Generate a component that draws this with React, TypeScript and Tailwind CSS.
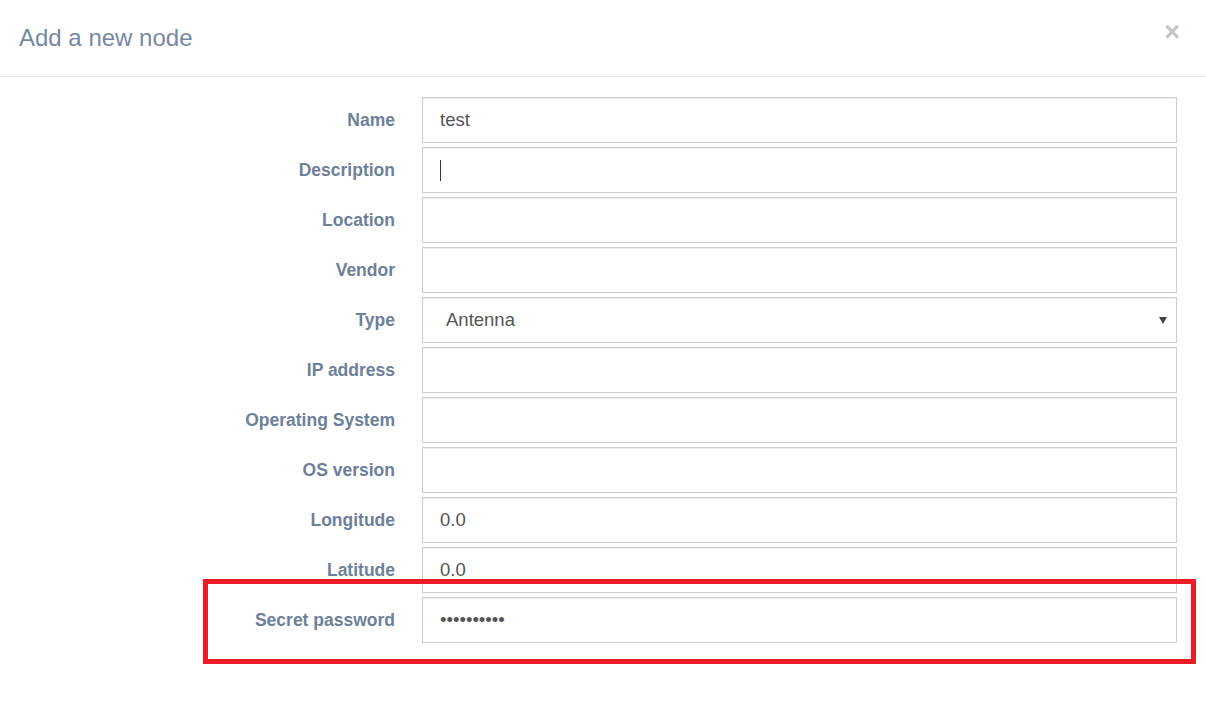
import React from 'react';

const fields: { label: string; value?: string; select?: boolean; caret?: boolean }[] = [
  { label: 'Name', value: 'test' },
  { label: 'Description', caret: true },
  { label: 'Location' },
  { label: 'Vendor' },
  { label: 'Type', value: 'Antenna', select: true },
  { label: 'IP address' },
  { label: 'Operating System' },
  { label: 'OS version' },
  { label: 'Longitude', value: '0.0' },
  { label: 'Latitude', value: '0.0' },
  { label: 'Secret password', value: '••••••••••' },
];

function App() {
  return (
    <div className="relative w-[1206px] h-[701px] bg-white overflow-hidden font-['Liberation_Sans',Arial,sans-serif]">
      {/* Header */}
      <div className="h-[77px] border-b border-[#e5e5e5] flex items-center justify-between pl-[19px] pr-[26px]">
        <h4 className="text-[24px] text-[#7489a1] leading-none pb-[1px]">Add a new node</h4>
        <span className="text-[27px] font-bold text-[#c4c4c4] leading-none -mt-[12px]">×</span>
      </div>

      {/* Form */}
      <div className="pt-[20px] flex flex-col gap-[4px]">
        {fields.map((f) => (
          <div key={f.label} className="flex items-center">
            <label className="w-[395px] text-right text-[17.5px] font-bold text-[#6c809a]">{f.label}</label>
            <div className="ml-[27px] w-[755px] h-[46px] border border-[#cccccc] shadow-[inset_0_1px_1px_rgba(0,0,0,0.075)] flex items-center text-[18.5px] text-[#555555]">
              {f.select ? (
                <div className="flex-1 flex items-center justify-between pl-[23px] pr-[9px]">
                  <span>{f.value}</span>
                  <svg width="8" height="7" viewBox="0 0 8 7" className="mt-[1px]">
                    <path d="M0 0h8L4 7z" fill="#444" />
                  </svg>
                </div>
              ) : f.caret ? (
                <span className="ml-[17px] w-[1px] h-[21px] bg-[#333]" />
              ) : (
                <span className="pl-[17px]">{f.value}</span>
              )}
            </div>
          </div>
        ))}
      </div>

      {/* Annotation box */}
      <div className="absolute left-[203px] top-[579px] w-[993px] h-[85px] border-[5px] border-[#ed1c24]" />
    </div>
  );
}

export default App;
